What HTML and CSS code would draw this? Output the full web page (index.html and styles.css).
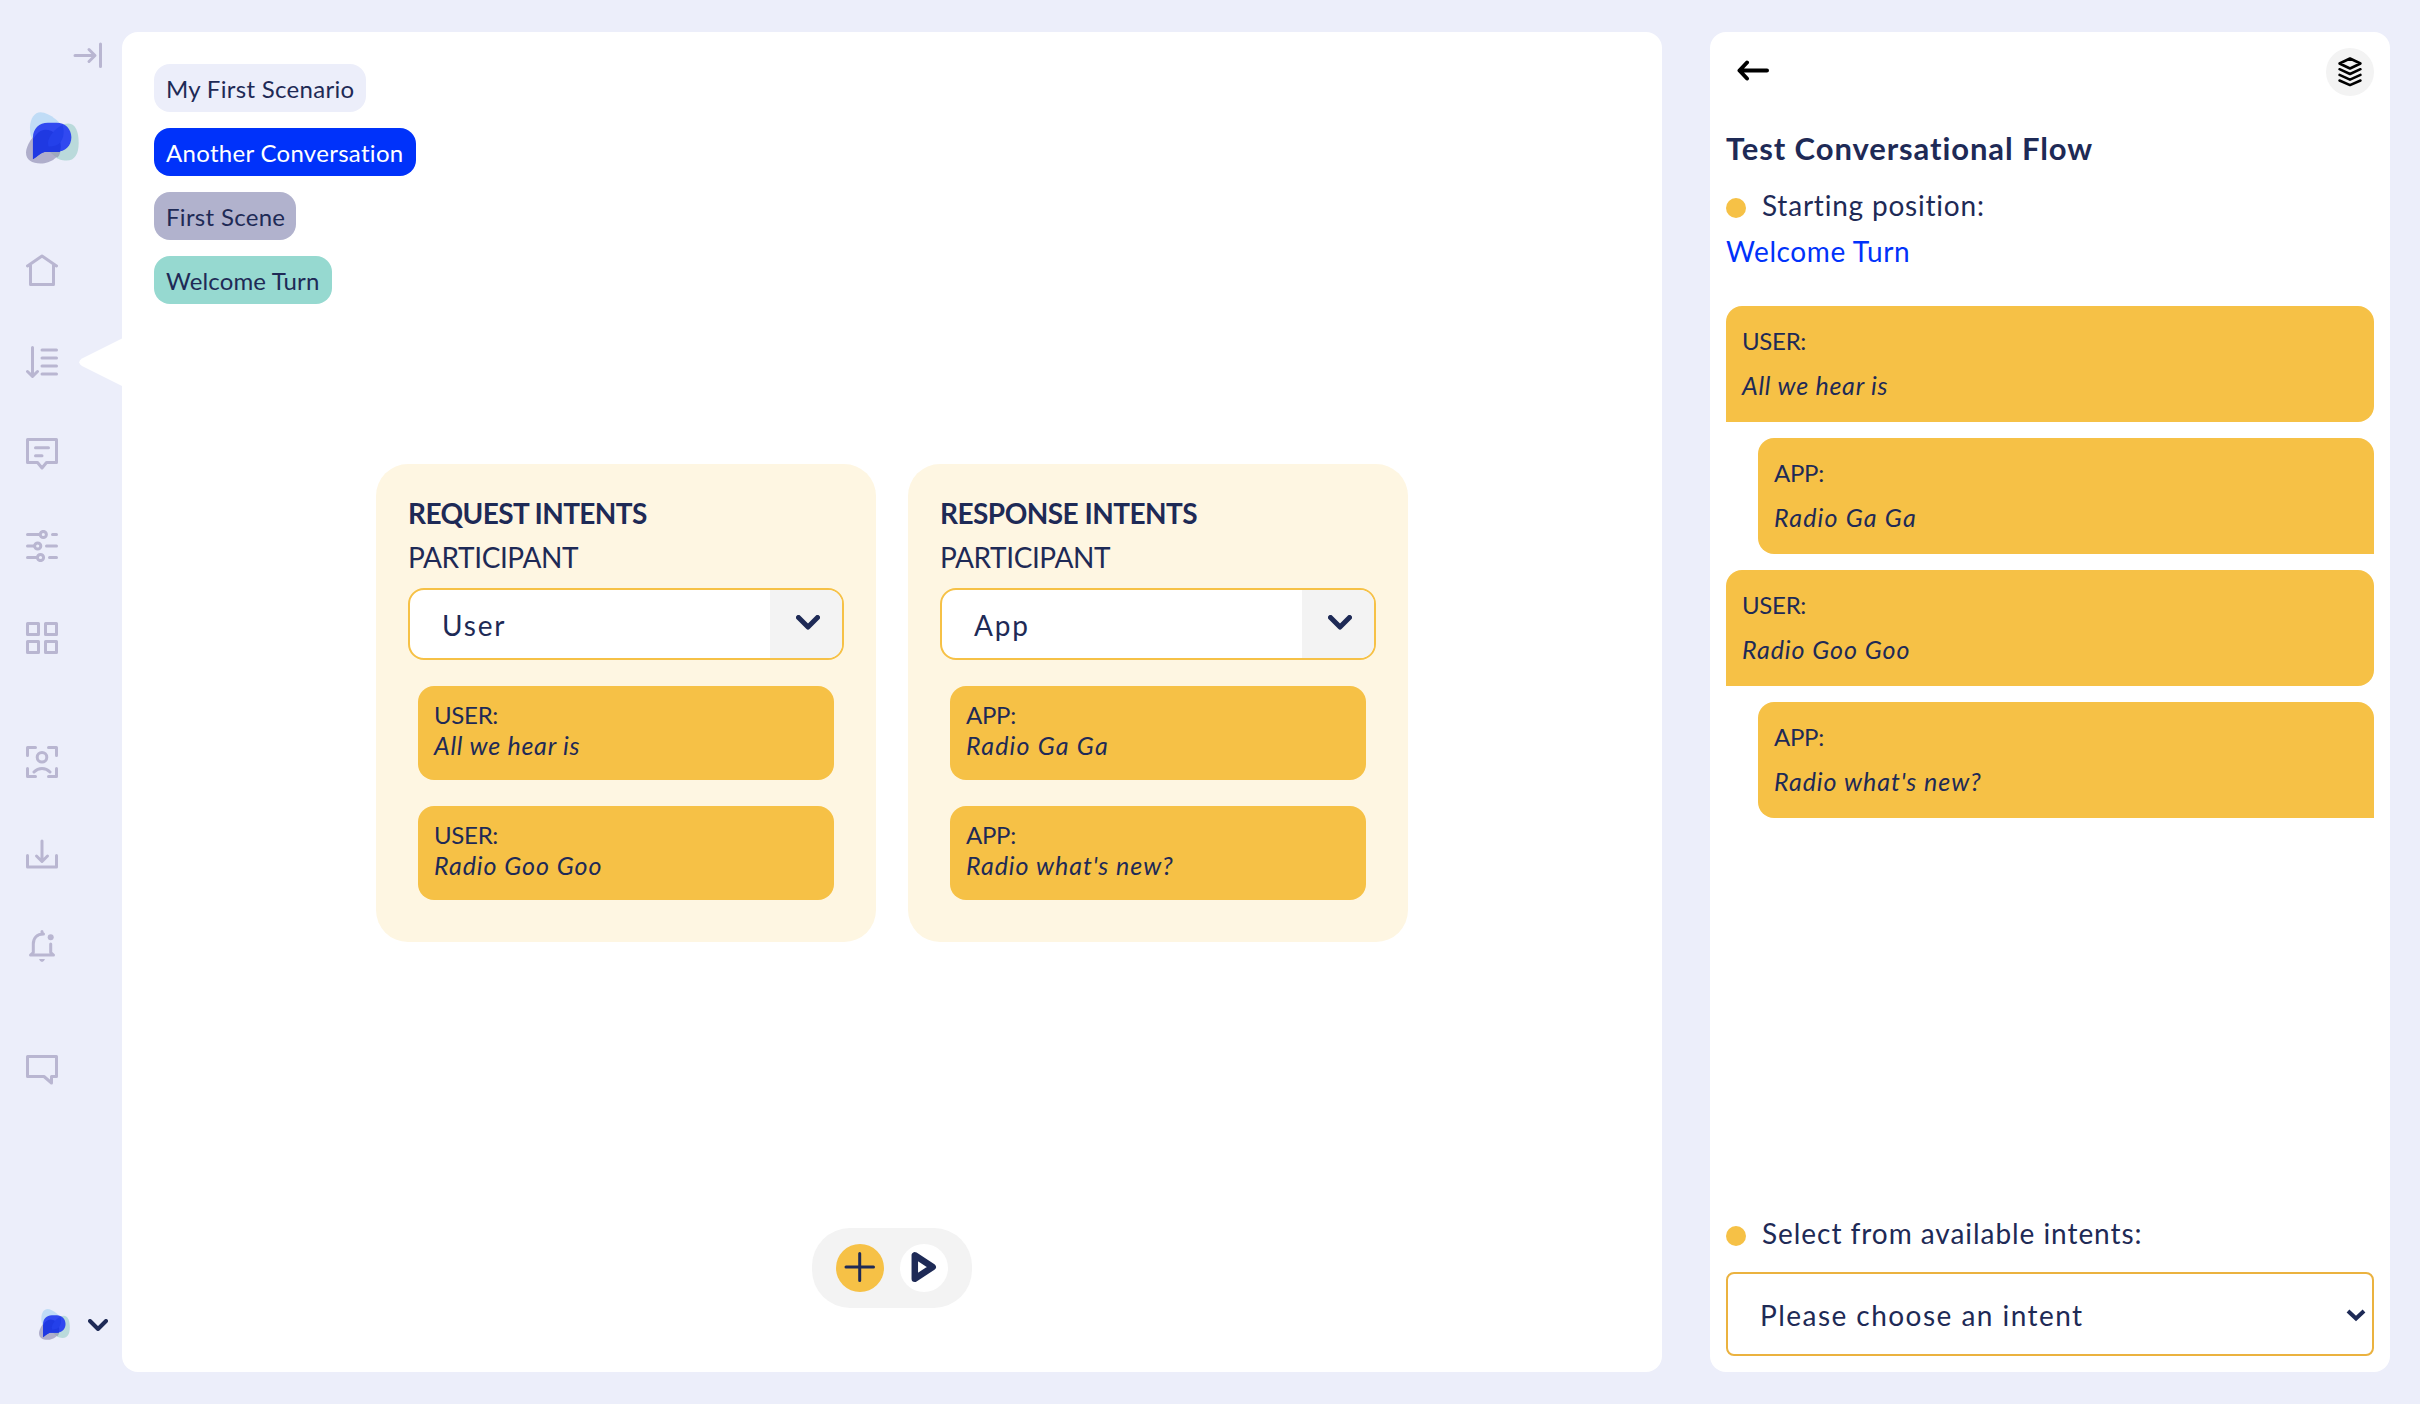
FILE: index.html
```html
<!DOCTYPE html>
<html lang="en">
<head>
<meta charset="utf-8">
<title>Conversation designer</title>
<link rel="stylesheet" href="styles.css">
</head>
<body>
<svg class="defs" aria-hidden="true">
  <symbol id="logo" viewBox="0 0 160 156">
    <path d="M44 0C26 0 12 18 12 48C12 80 22 100 60 100C100 100 114 80 114 56C114 36 70 0 44 0Z" fill="#c0dcf6"/>
    <path d="M128 34C150 34 159 60 159 92C159 125 148 146 122 146C95 146 65 125 65 98C65 70 95 34 128 34Z" fill="#badadb"/>
    <path d="M58 53C85 53 105 75 105 103C105 135 75 155 44 155C18 155 0 145 0 122C0 100 28 53 58 53Z" fill="#afaecb"/>
    <path d="M105 103C105 118 103 130 95 137C78 128 65 115 65 98Z" fill="#9ea9bd"/>
    <path d="M21 142V76C21 50 40 32 66 32H92C118 32 137 50 137 76C137 102 118 120 92 120H56C45 123 35 132 21 142Z" fill="#3149f0"/>
    <path d="M21 142V82C32 64 44 53 58 53C85 53 105 75 105 103Q105 112 102 120H56C45 123 35 132 21 142Z" fill="#1f39e2"/>
    <path d="M66 93C68 74 86 50 110 39C118 58 114 90 92 100Q80 104 68 104Z" fill="#2440ea"/>
  </symbol>
</svg>
<div class="app">
  <nav class="sidebar">
    <svg class="collapse" width="30" height="28" viewBox="0 0 30 28"><path d="M2 13.500H21.500M16 7.500L22 13.500L16 19.500M27.500 2V24.500"/></svg>
    <svg class="logo" width="53" height="52"><use href="#logo"/></svg>
    <div class="nav-group">
      <svg viewBox="0 0 32 32"><path d="M1.500 12L16 2L30.500 12M4.500 11V30.500H27.500V11"/></svg>
      <svg viewBox="0 0 32 32"><path d="M6.500 1.500V30M1.500 25.500L6.500 30.300L11.500 25.500M16 4H30.500M16 12H30.500M16 20H30.500M16 28H30.500"/></svg>
      <svg viewBox="0 0 32 32"><path d="M1.500 1.500H30.500V24.500H20.500L16 30L11.500 24.500H1.500ZM9.500 9.700H22.500M9.500 17.700H16"/></svg>
      <svg viewBox="0 0 32 32"><path d="M1.500 4.500H14M26.500 4.500H30.500M1.500 16H8M20.500 16H30.500M1.500 27.500H11M23.500 27.500H30.500"/><circle cx="17.300" cy="4.500" r="3.100"/><circle cx="11.700" cy="16" r="3.100"/><circle cx="14.500" cy="27.500" r="3.100"/></svg>
      <svg viewBox="0 0 32 32"><path d="M1.500 1.500H12.500V12.500H1.500ZM19.500 1.500H30.500V12.500H19.500ZM1.500 19.500H12.500V30.500H1.500ZM19.500 19.500H30.500V30.500H19.500Z"/></svg>
    </div>
    <div class="nav-group">
      <svg viewBox="0 0 32 32"><path d="M1.500 9.500V1.500H9.500M22.500 1.500H30.500V9.500M30.500 22.500V30.500H22.500M9.500 30.500H1.500V22.500M8 26C12.500 21.300 19.500 21.300 24 26"/><circle cx="16" cy="11.200" r="4.800"/></svg>
      <svg viewBox="0 0 32 32"><path d="M1.500 17.500V29H30.500V17.500M16 3V23M10.500 18L16 23.500L21.500 18"/></svg>
      <svg viewBox="0 0 32 32"><path d="M16 1.500V4M17.500 4C11 4 7.300 8 7.300 14V22.500L4.500 25H27.500L24.700 22.500V14"/><circle class="solid" cx="24.700" cy="7.300" r="3"/><path class="solid" d="M13 29H19Q18 32 16 32Q14 32 13 29Z"/></svg>
    </div>
    <div class="nav-group">
      <svg viewBox="0 0 32 32"><path d="M1.500 2.500H30.500V22.500H25.500V29L18 22.500H1.500Z"/></svg>
    </div>
    <div class="account">
      <svg width="31" height="31" viewBox="0 0 160 156" preserveAspectRatio="none"><use href="#logo" width="160" height="156"/></svg>
      <svg class="navy" width="20" height="12" viewBox="0 0 20 12"><path d="M2 2L10 10L18 2" stroke-width="4"/></svg>
    </div>
    <svg class="pointer" width="44" height="50" viewBox="0 0 44 50"><path d="M44 0L3 20.500Q-2.500 24 3 28L44 48.500Z"/></svg>
  </nav>

  <main class="panel canvas">
    <div class="crumbs">
      <span class="crumb scenario">My First Scenario</span>
      <span class="crumb conversation">Another Conversation</span>
      <span class="crumb scene">First Scene</span>
      <span class="crumb turn">Welcome Turn</span>
    </div>
    <div class="cards">
      <section class="card">
        <h2 class="request">REQUEST INTENTS</h2>
        <p class="participant">PARTICIPANT</p>
        <div class="select"><span>User</span><i><svg class="navy" width="24" height="15" viewBox="0 0 24 15"><path d="M2.500 2.500L12 12L21.500 2.500" stroke-width="5"/></svg></i></div>
        <div class="intent"><p>USER:</p><em class="tight">All we hear is</em></div>
        <div class="intent"><p>USER:</p><em>Radio Goo Goo</em></div>
      </section>
      <section class="card">
        <h2>RESPONSE INTENTS</h2>
        <p class="participant">PARTICIPANT</p>
        <div class="select"><span>App</span><i><svg class="navy" width="24" height="15" viewBox="0 0 24 15"><path d="M2.500 2.500L12 12L21.500 2.500" stroke-width="5"/></svg></i></div>
        <div class="intent"><p>APP:</p><em class="loose">Radio Ga Ga</em></div>
        <div class="intent"><p>APP:</p><em>Radio what's new?</em></div>
      </section>
    </div>
    <div class="toolbar">
      <button class="add"><svg class="navy" width="48" height="48" viewBox="0 0 48 48"><path d="M10 23H37.500M23.700 9.500V36.500" stroke-width="3"/></svg></button>
      <button class="play"><svg class="navy" width="48" height="48" viewBox="0 0 48 48"><path d="M14.800 11.300V34.700L32.700 23Z" stroke-width="6.500"/></svg></button>
    </div>
  </main>

  <aside class="panel tester">
    <header>
      <svg width="32" height="21" viewBox="0 0 32 21"><path d="M2.500 10.500H30M10 2.500L2.500 10.500L10 18.500" stroke-width="4"/></svg>
      <span class="layers"><svg width="26" height="30" viewBox="0 0 26 30"><path d="M13 1.500L23.500 6.500L13 11.500L2.500 6.500ZM2.500 12.200L13 17L23.500 12.200M2.500 17.900L13 22.700L23.500 17.900M2.500 23.500L13 28.100L23.500 23.500" stroke-width="2.500"/></svg></span>
    </header>
    <h1>Test Conversational Flow</h1>
    <p class="label start">Starting position:</p>
    <p class="link">Welcome Turn</p>
    <div class="chat">
      <div class="bubble user"><p>USER:</p><em class="tight">All we hear is</em></div>
      <div class="bubble bot"><p>APP:</p><em class="loose">Radio Ga Ga</em></div>
      <div class="bubble user"><p>USER:</p><em>Radio Goo Goo</em></div>
      <div class="bubble bot"><p>APP:</p><em>Radio what's new?</em></div>
    </div>
    <p class="label choose">Select from available intents:</p>
    <div class="picker"><span>Please choose an intent</span><svg class="navy" width="20" height="14" viewBox="0 0 20 14"><path d="M2 3L10 10.500L18 3" stroke-width="4" stroke-linecap="butt" stroke-linejoin="miter"/></svg></div>
  </aside>
</div>
</body>
</html>
```
FILE: styles.css
```css
* { box-sizing: border-box; margin: 0; padding: 0; }

body {
  background: #eceefa;
  color: #1e2a56;
  font: 24px/30px Lato, sans-serif;
}

svg {
  display: block;
  fill: none;
  stroke: currentColor;
  stroke-width: 3;
  stroke-linecap: round;
  stroke-linejoin: round;
}

.defs { position: absolute; width: 0; height: 0; }
.navy { color: #1e2a56; }

.app {
  display: flex;
  height: 1404px;
  width: 2420px;
  padding: 32px 30px 32px 0;
}

.panel { background: #fff; border-radius: 16px; }

/* Sidebar */
.sidebar {
  position: relative;
  display: flex;
  flex-direction: column;
  width: 122px;
  padding-left: 26px;
  color: #b9b6d1;
}

.collapse { margin: 10px 0 0 47px; }
.logo, .account svg:first-child, #logo path { stroke: none; }
.logo { margin: 42px 0 90px; }

.nav-group { display: flex; flex-direction: column; gap: 60px; margin-bottom: 92px; }
.nav-group svg { width: 32px; height: 32px; }
.nav-group .solid { fill: currentColor; stroke: none; }

.account { display: flex; align-items: center; gap: 18px; margin: auto 0 32px 13px; }

.pointer { position: absolute; left: 79px; top: 306px; fill: #fff; stroke: none; }

/* Canvas */
.canvas {
  display: flex;
  flex-direction: column;
  width: 1540px;
  margin-right: 48px;
  padding: 32px 32px 64px;
}

.crumbs { display: flex; flex-direction: column; align-items: flex-start; gap: 16px; }

.crumb {
  height: 48px;
  padding: 1px 0 0 12px;
  border-radius: 16px;
  line-height: 48px;
  letter-spacing: .3px;
}
.scenario { width: 212px; background: #eceefa; }
.conversation { width: 262px; background: #0032fa; color: #fff; }
.scene { width: 142px; background: #b1b2cd; }
.turn { width: 178px; background: #96d9d0; letter-spacing: .15px; }

.cards { display: flex; justify-content: center; gap: 32px; margin-top: 160px; }

.card {
  width: 500px;
  height: 478px;
  padding: 32px;
  border-radius: 32px;
  background: #fef6e2;
}

.card h2 { font-size: 28px; line-height: 34px; letter-spacing: -.54px; }
.card .request { letter-spacing: -.6px; }
.participant { margin: 10px 0 14px; font-size: 28px; line-height: 34px; letter-spacing: -.4px; }

.select {
  display: flex;
  justify-content: space-between;
  height: 72px;
  border: 2px solid #f6c146;
  border-radius: 16px;
  overflow: hidden;
  background: #fff;
  font-size: 28px;
  line-height: 68px;
  letter-spacing: 1.8px;
}
.select span { padding: 1px 0 0 32px; }
.select i { width: 72px; padding: 25px 0 0 26px; background: #f3f3f3; }

.intent {
  height: 94px;
  margin: 26px 10px 0;
  padding: 14px 16px;
  border-radius: 16px;
  background: #f6c146;
}
.intent p, .bubble p { letter-spacing: -.3px; }
em { display: block; font-size: 25px; letter-spacing: .95px; }
.tight { letter-spacing: .73px; }
.loose { letter-spacing: 1.2px; }

.toolbar {
  display: flex;
  align-self: center;
  gap: 16px;
  width: 160px;
  height: 80px;
  margin-top: auto;
  padding: 16px 24px;
  border-radius: 38px;
  background: #f3f3f3;
}
.toolbar button { width: 48px; height: 48px; border: 0; border-radius: 50%; }
.add { background: #f6c146; }
.play { background: #fff; }

/* Conversation tester */
.tester {
  display: flex;
  flex-direction: column;
  width: 680px;
  padding: 16px;
}

.tester header { display: flex; justify-content: space-between; padding-left: 11px; color: #000; }
.tester header > svg { margin-top: 12px; }
.layers { width: 48px; height: 48px; padding: 9px 11px; border-radius: 50%; background: #f3f3f3; }

h1 { margin: 32px 0 14px; font-size: 31px; line-height: 40px; letter-spacing: .9px; }

.label { display: flex; align-items: center; gap: 16px; font-size: 28px; line-height: 46px; }
.label::before { content: ""; width: 20px; height: 20px; margin-top: 6px; border-radius: 50%; background: #f6c146; }
.start { letter-spacing: .79px; }
.link { color: #0032fa; font-size: 28px; line-height: 46px; letter-spacing: .6px; }

.chat { display: flex; flex-direction: column; gap: 16px; margin: 32px 0 auto; }
.bubble { height: 116px; padding: 13px 16px; background: #f6c146; line-height: 44px; }
.user { border-radius: 16px 16px 16px 0; }
.bot { margin-left: 32px; border-radius: 16px 16px 0 16px; }

.choose { letter-spacing: .95px; }
.picker {
  display: flex;
  justify-content: space-between;
  align-items: center;
  height: 84px;
  margin-top: 16px;
  padding: 2px 6px 0 32px;
  border: 2px solid #ebb23f;
  border-radius: 8px;
  font-size: 28px;
  letter-spacing: 1.46px;
}
```
